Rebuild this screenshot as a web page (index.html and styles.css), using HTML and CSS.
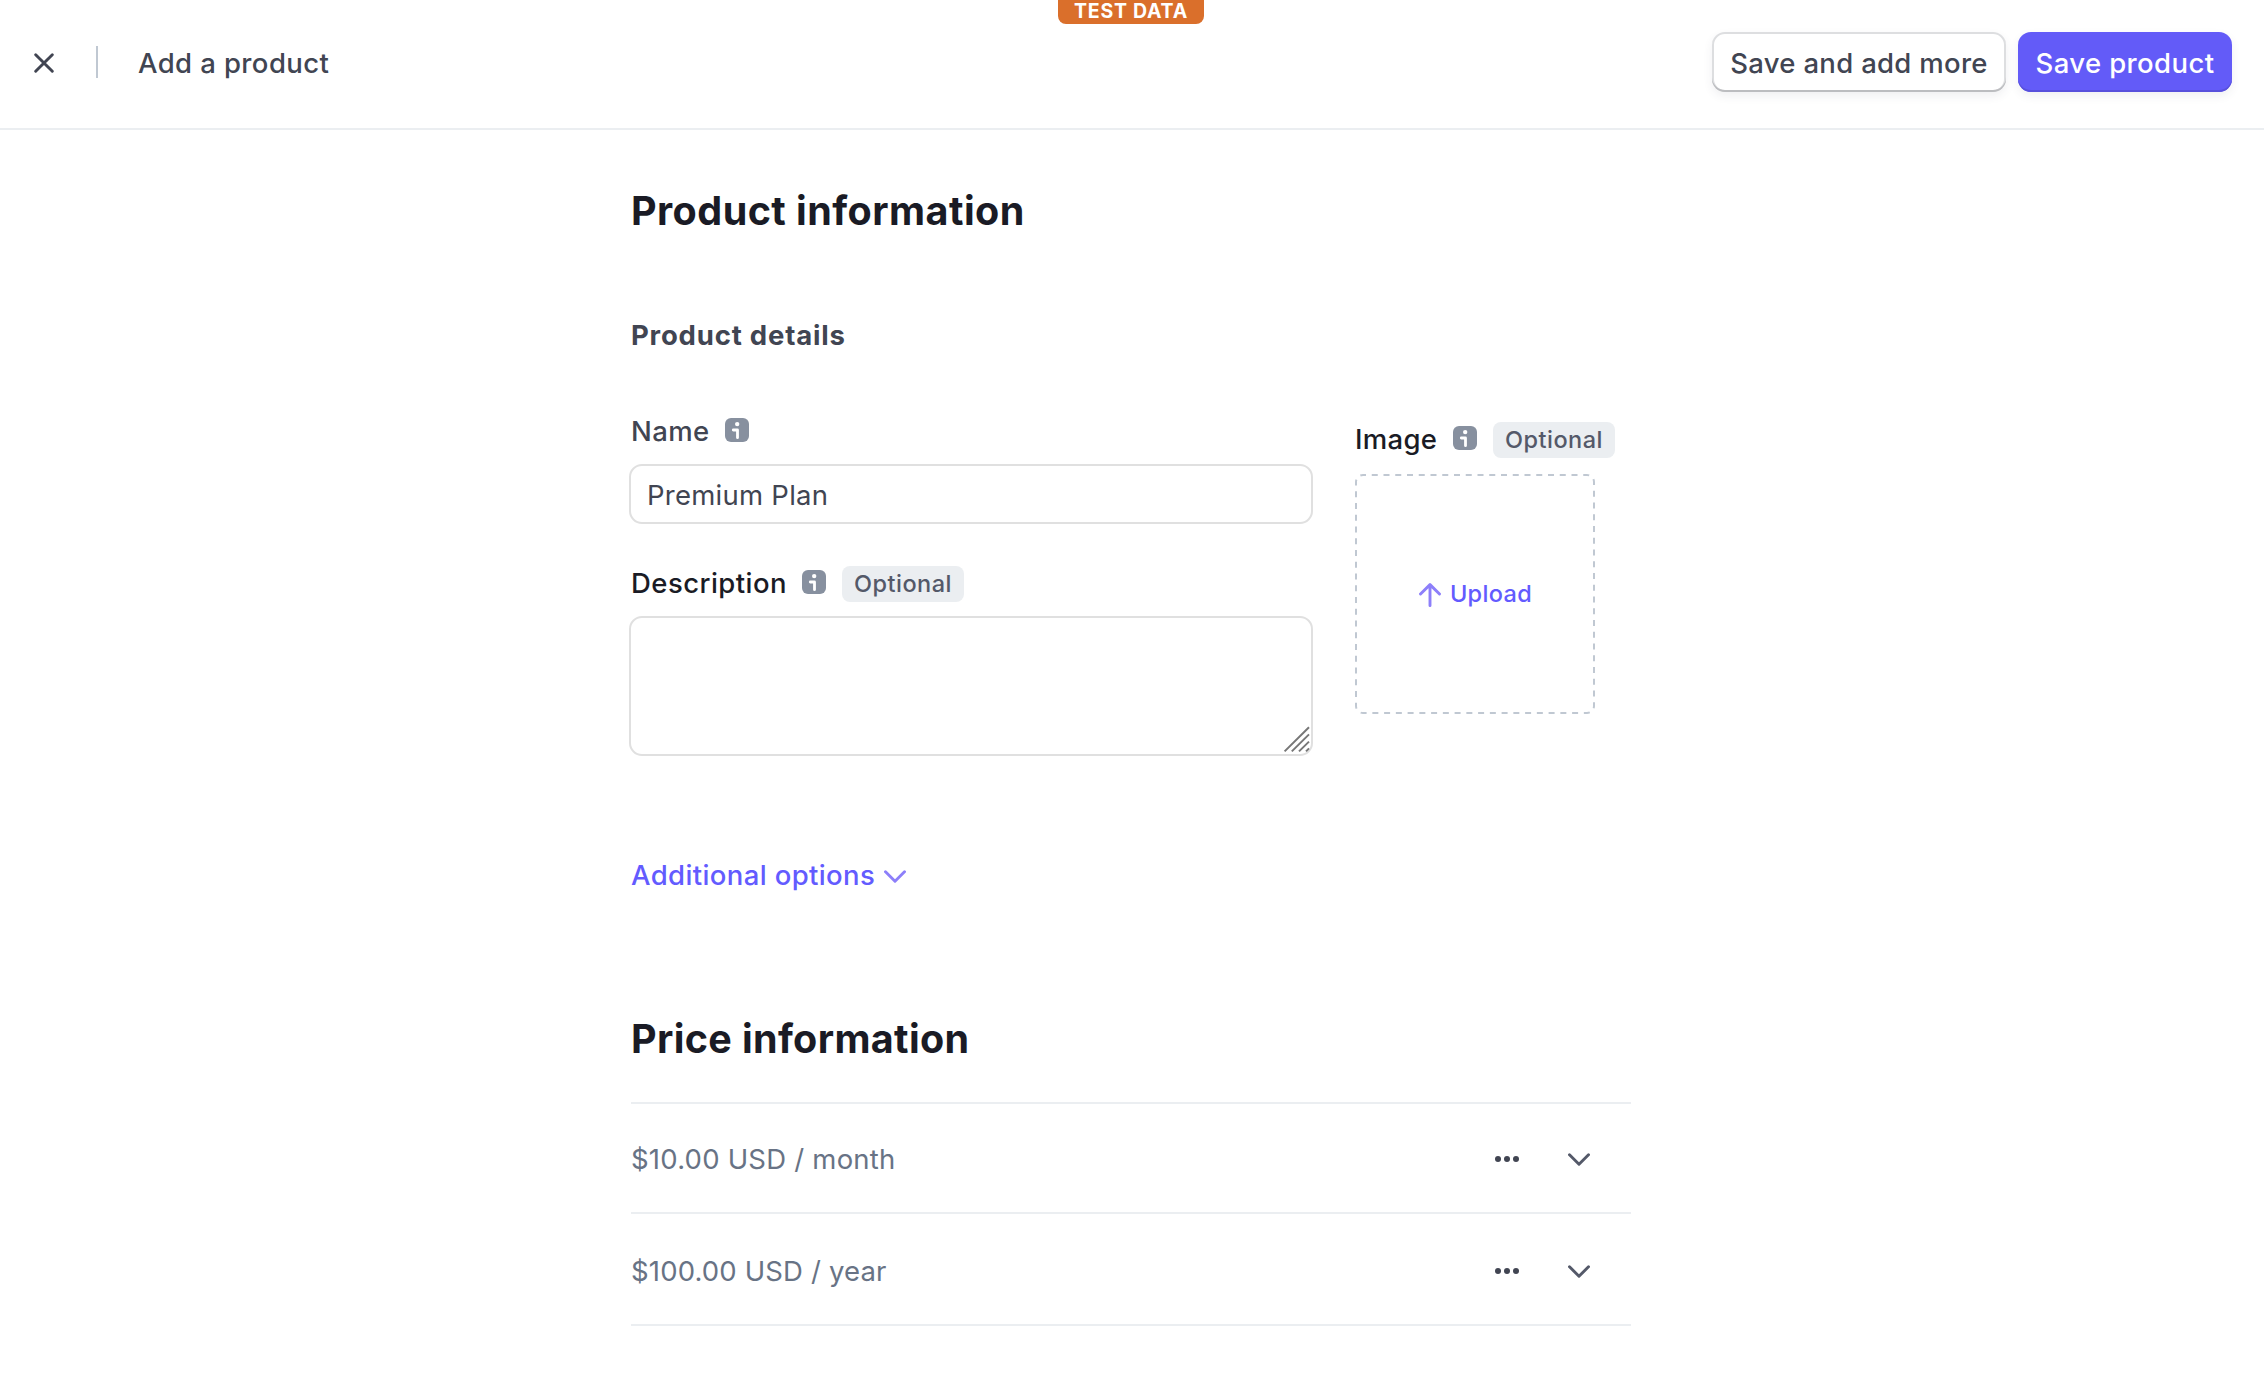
FILE: index.html
```html
<!DOCTYPE html>
<html lang="en">
<head>
<meta charset="utf-8">
<title>Add a product</title>
<link rel="stylesheet" href="styles.css">
</head>
<body>
<svg width="0" height="0" class="sprite" aria-hidden="true">
  <symbol id="info" viewBox="0 0 24 24">
    <rect width="24" height="24" rx="6" fill="#87909f"/>
    <circle cx="12.2" cy="6.1" r="2.2" fill="#fff"/>
    <path d="M8.3 12h4.2v7.7" fill="none" stroke="#fff" stroke-width="2.8" stroke-linecap="round" stroke-linejoin="round"/>
  </symbol>
  <symbol id="chevron" viewBox="0 0 22 14">
    <path d="M1.5 1.8L11 11.2l9.5-9.4" fill="none" stroke="currentColor" stroke-width="2.9" stroke-linecap="round" stroke-linejoin="round"/>
  </symbol>
  <symbol id="dots" viewBox="0 0 24 6">
    <circle cx="3" cy="3" r="3"/><circle cx="12" cy="3" r="3"/><circle cx="21" cy="3" r="3"/>
  </symbol>
</svg>

<header class="topbar">
  <button class="close" aria-label="Close">
    <svg width="20" height="20" viewBox="0 0 20 20"><path d="M1.7 1.7l16.6 16.6M18.3 1.7L1.7 18.3" fill="none" stroke="#414552" stroke-width="2.9" stroke-linecap="round"/></svg>
  </button>
  <span class="rule"></span>
  <span class="title">Add a product</span>
  <div class="actions">
    <button class="btn secondary">Save and add more</button>
    <button class="btn primary">Save product</button>
  </div>
  <span class="badge">TEST DATA</span>
</header>

<main class="page">
  <h1 class="heading">Product information</h1>
  <h2 class="subheading">Product details</h2>

  <div class="form">
    <div class="fields">
      <div class="label-row">
        <label class="label muted" for="name">Name</label>
        <svg class="info"><use href="#info"/></svg>
      </div>
      <input class="input" id="name" type="text" value="Premium Plan">
      <div class="label-row description">
        <label class="label" for="desc">Description</label>
        <svg class="info"><use href="#info"/></svg>
        <span class="chip">Optional</span>
      </div>
      <div class="area-wrap">
        <textarea class="area" id="desc"></textarea>
        <svg class="grip" width="27" height="27" viewBox="0 0 27 27"><path d="M1.6 25.4L26 1.2M8.8 25.4L26 8.4M16 25.4L26 15.6M23 25.4l3-3" fill="none" stroke="#777" stroke-width="2"/></svg>
      </div>
    </div>
    <div class="image-col">
      <div class="label-row">
        <span class="label image-label">Image</span>
        <svg class="info"><use href="#info"/></svg>
        <span class="chip">Optional</span>
      </div>
      <div class="dropzone">
        <svg class="dashes" width="240" height="240"><rect x="1" y="1" width="238" height="238" rx="7" fill="none" stroke="#c0c8d2" stroke-width="2" stroke-dasharray="6 5.75" stroke-dashoffset="3"/></svg>
        <svg class="arrow" width="22" height="24" viewBox="0 0 22 24"><path d="M11 22.6V1.6M1.5 11L11 1.6l9.5 9.4" fill="none" stroke="#8d7ffa" stroke-width="2.9" stroke-linecap="round" stroke-linejoin="round"/></svg>
        <span>Upload</span>
      </div>
    </div>
  </div>

  <a class="more"><span>Additional options</span><svg width="22" height="14"><use href="#chevron"/></svg></a>

  <h1 class="heading price-heading">Price information</h1>
  <ul class="prices">
    <li class="price">
      <span>$10.00 USD / month</span>
      <svg class="dots" width="24" height="6"><use href="#dots"/></svg>
      <svg class="chev" width="22" height="14"><use href="#chevron"/></svg>
    </li>
    <li class="price">
      <span>$100.00 USD / year</span>
      <svg class="dots" width="24" height="6"><use href="#dots"/></svg>
      <svg class="chev" width="22" height="14"><use href="#chevron"/></svg>
    </li>
  </ul>
</main>
</body>
</html>
```
FILE: styles.css
```css
* { box-sizing: border-box; }
body {
  margin: 0;
  background: #fff;
  color: #414552;
  font-family: Inter, "Liberation Sans", sans-serif;
  font-size: 27.5px;
  line-height: 36px;
}
svg { display: block; flex: none; }
.sprite { position: absolute; }
button { font: inherit; border: 0; padding: 0; background: none; }

.topbar {
  position: relative;
  display: flex;
  align-items: flex-start;
  height: 130px;
  padding: 32px 32px 0 34px;
  border-bottom: 2px solid #ebeef1;
}
.close { margin-top: 21px; width: 20px; height: 20px; }
.rule { margin: 14px 0 0 42px; width: 2px; height: 32px; background: #c0c8d2; }
.title { margin: 13px 0 0 40px; font-weight: 500; letter-spacing: 0.4px; }
.actions { display: flex; gap: 12px; margin-left: auto; }
.btn {
  height: 60px;
  padding-top: 2px;
  border-radius: 13px;
  font-weight: 500;
  white-space: nowrap;
}
.secondary {
  width: 294px;
  color: #414552;
  background: #fff;
  letter-spacing: 0.3px;
  box-shadow: inset 0 -2px 0 #bcbdc0, inset 0 0 0 2px #dddee0, 0 4px 10px rgba(60, 66, 87, 0.08);
}
.primary {
  width: 214px;
  color: #fff;
  background: #635bf8;
  letter-spacing: 0.4px;
  box-shadow: inset 0 -2px 0 #5850dc, 0 4px 10px rgba(60, 66, 87, 0.08);
}
.badge {
  position: absolute;
  top: 0;
  left: 1058px;
  width: 146px;
  height: 24px;
  border-radius: 0 0 8px 8px;
  background: #da6f2b;
  color: #fff;
  font-size: 19.5px;
  font-weight: 700;
  line-height: 22px;
  letter-spacing: 0.75px;
  text-align: center;
}

.page { width: 1000px; margin-left: 631px; padding-top: 57px; }
.heading {
  margin: 0;
  color: #1a1b25;
  font-size: 39.5px;
  font-weight: 700;
  line-height: 48px;
  letter-spacing: 0.45px;
}
.subheading {
  margin: 84px 0 0;
  font-size: 27.5px;
  font-weight: 700;
  line-height: 32px;
  letter-spacing: 0.8px;
}
.form { display: flex; gap: 42px; margin-top: 62px; }
.fields { width: 684px; margin-left: -2px; }
.fields .label-row { padding-left: 2px; }
.label-row { display: flex; align-items: flex-start; height: 36px; }
.label { width: 157px; color: #1a1b25; font-weight: 500; letter-spacing: 0.45px; white-space: nowrap; }
.muted { width: 80px; color: #414552; letter-spacing: 0.4px; }
.image-label { width: 84px; letter-spacing: 0.3px; }
.info { width: 24px; height: 24px; margin: 5px 0 0 14px; }
.chip {
  width: 122px;
  height: 36px;
  margin: 1px 0 0 16px;
  border-radius: 8px;
  background: #ebeef1;
  color: #545969;
  font-size: 23.5px;
  font-weight: 500;
  letter-spacing: 0.5px;
  text-align: center;
}
.input, .area {
  display: block;
  width: 100%;
  border: 2px solid #e0e0e0;
  border-radius: 13px;
  background: #fff;
  color: #414552;
  font: inherit;
  letter-spacing: 0.25px;
  outline: 0;
}
.input { height: 60px; margin-top: 15px; padding: 1px 16px 0; }
.description { margin-top: 41px; }
.area-wrap { position: relative; margin-top: 15px; }
.area { height: 140px; resize: none; }
.grip { position: absolute; right: 3px; bottom: 3px; }

.image-col { margin-top: 8px; }
.dropzone {
  position: relative;
  display: flex;
  align-items: center;
  justify-content: center;
  gap: 9px;
  width: 240px;
  height: 240px;
  margin-top: 17px;
  padding-left: 1px;
  color: #635bff;
  font-size: 23.5px;
  font-weight: 500;
  letter-spacing: 0.35px;
}
.dashes { position: absolute; inset: 0; }
.arrow { margin-top: 2px; }

.more {
  display: flex;
  margin-top: 101px;
  color: #635bff;
  font-weight: 500;
  letter-spacing: 0.38px;
}
.more span { width: 253px; }
.more svg { margin-top: 13px; color: #8d7ffa; }

.price-heading { margin-top: 122px; letter-spacing: 0.35px; }
.prices { list-style: none; margin: 39px 0 0; padding: 0; border-top: 2px solid #ebeef1; }
.price {
  display: flex;
  height: 110px;
  padding: 37px 41px 0 0;
  border-bottom: 2px solid #ebeef1;
  color: #687385;
  letter-spacing: 0.22px;
}
.price + .price { height: 112px; padding-top: 39px; letter-spacing: 0.15px; }
.dots { margin: 15px 0 0 auto; fill: #414552; }
.chev { margin: 12px 0 0 49px; color: #545969; }
```
